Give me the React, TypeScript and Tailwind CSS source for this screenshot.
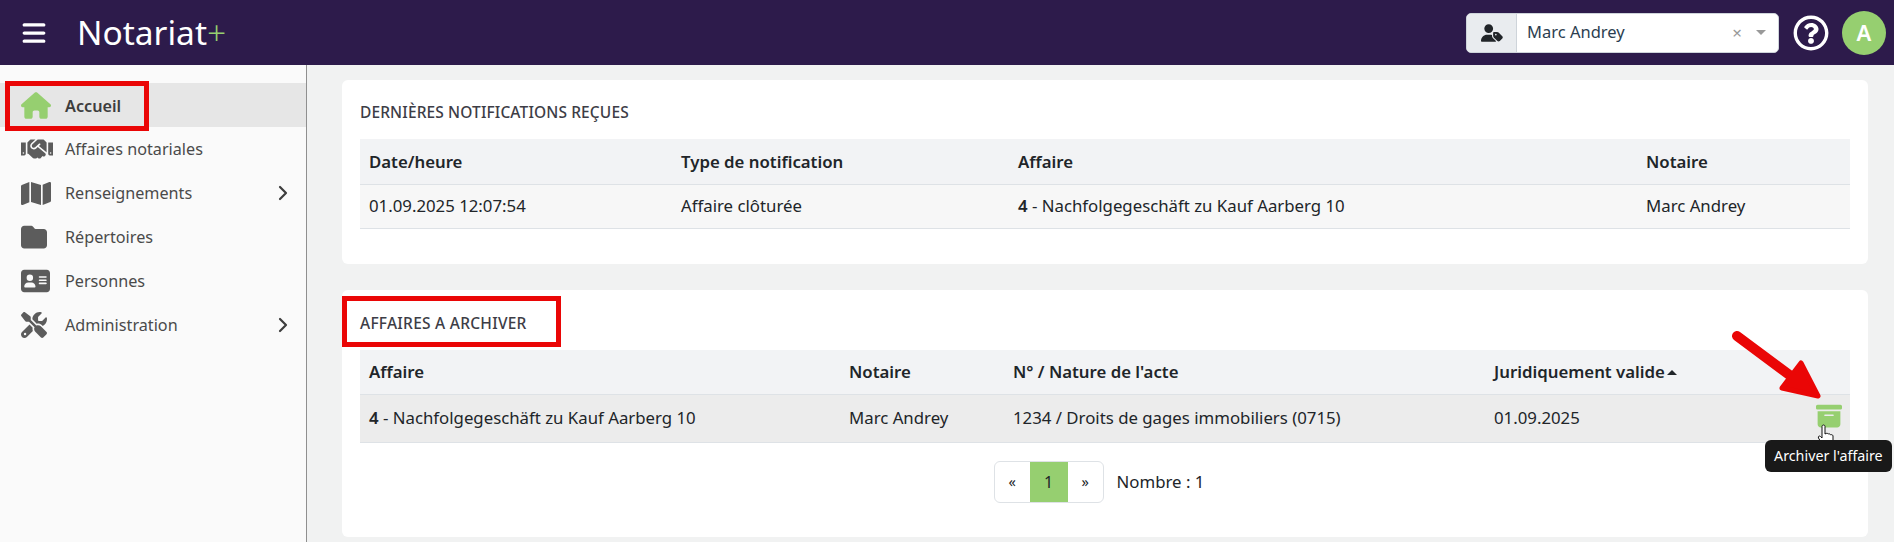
import { ChevronRight } from "lucide-react";
import { FaHouse, FaMap, FaFolder, FaAddressCard, FaScrewdriverWrench, FaBoxArchive, FaUserTag, FaBars } from "react-icons/fa6";
import { FaRegQuestionCircle, FaHandshake } from "react-icons/fa";

const menu = [
  { label: "Accueil", icon: FaHouse, size: "h-[27px] w-[30px] text-[#96cf70]", active: true },
  { label: "Affaires notariales", icon: FaHandshake, size: "h-[26px] w-[32px] text-[#5c5c5c]" },
  { label: "Renseignements", icon: FaMap, size: "h-[27px] w-[30px] text-[#5c5c5c]", sub: true },
  { label: "Répertoires", icon: FaFolder, size: "h-[26px] w-[26px] text-[#5c5c5c]" },
  { label: "Personnes", icon: FaAddressCard, size: "h-[26px] w-[29px] text-[#5c5c5c]" },
  { label: "Administration", icon: FaScrewdriverWrench, size: "h-[26px] w-[26px] text-[#5c5c5c]", sub: true },
];

function Header() {
  return (
    <header className="flex h-[65px] items-center bg-[#2d1b4b] pl-[22px] pr-[8px]">
      <FaBars className="h-[26px] w-[24px] text-white" />
      <div className="ml-[31px] text-[33.5px] leading-none text-white">
        Notariat<span className="font-light text-[#96cf70]">+</span>
      </div>
      <div className="ml-auto flex h-[40px] w-[313px] overflow-hidden rounded-[5px] border border-[#ced4da] bg-white">
        <div className="flex w-[50px] items-center justify-center border-r border-[#ced4da] bg-[#e9ecef]">
          <FaUserTag className="h-[18px] w-[22px] text-[#212529]" />
        </div>
        <div className="flex flex-1 items-center pl-[10px] pr-[12px] text-[16.5px] text-[#2c3e50]">
          Marc Andrey
          <span className="ml-auto text-[17px] text-[#999]">×</span>
          <span className="ml-[14px] h-0 w-0 border-x-[5px] border-t-[5px] border-x-transparent border-t-[#999]" />
        </div>
      </div>
      <FaRegQuestionCircle className="ml-[14px] h-[36px] w-[36px] text-white" />
      <div className="ml-[13px] flex h-[44px] w-[44px] items-center justify-center rounded-full bg-[#96cf70] text-[22px] font-semibold text-white">
        A
      </div>
    </header>
  );
}

function Sidebar() {
  return (
    <aside className="w-[307px] shrink-0 border-r border-[#8f8f8f] bg-[#fafafa] pt-[18px]">
      {menu.map((item) => {
        const Icon = item.icon;
        return (
          <div
            key={item.label}
            className={
              item.active
                ? "flex h-[44px] items-center bg-[#e6e6e6] pl-[21px] pr-[11px] text-[16.2px] font-semibold text-[#3d3d3d]"
                : "flex h-[44px] items-center pl-[21px] pr-[11px] text-[16.2px] text-[#4a4a4a]"
            }
          >
            <span className="flex w-[44px] items-center">
              <Icon className={item.size} />
            </span>
            <span className={item.active ? "pt-[3px]" : "pt-[1px]"}>{item.label}</span>
            {item.sub && <ChevronRight className="ml-auto h-[24px] w-[24px] text-[#3d3d3d]" strokeWidth={2.2} />}
          </div>
        );
      })}
    </aside>
  );
}

function Th({ w, children }: { w: string; children: React.ReactNode }) {
  return <th className={`${w} px-[9px] text-left font-semibold`}>{children}</th>;
}

function Notifications() {
  return (
    <section className="h-[184px] rounded-[6px] bg-white px-[18px] pt-[22px]">
      <h2 className="text-[15.5px] leading-[20px] font-medium tracking-[0.12px] text-[#3d3d46]">DERNIÈRES NOTIFICATIONS REÇUES</h2>
      <table className="mt-[17px] w-full table-fixed text-[16.8px] text-[#212529]">
        <thead>
          <tr className="h-[45px] border-b border-[#dee2e6] bg-[#f2f3f5]">
            <Th w="w-[312px]">Date/heure</Th>
            <Th w="w-[337px]">Type de notification</Th>
            <Th w="w-[628px]">Affaire</Th>
            <Th w="">Notaire</Th>
          </tr>
        </thead>
        <tbody>
          <tr className="h-[44px] border-b border-[#dee2e6] bg-[#f7f7f7]">
            <td className="px-[9px]">01.09.2025 12:07:54</td>
            <td className="px-[9px]">Affaire clôturée</td>
            <td className="px-[9px]">
              <b className="font-semibold">4</b> - Nachfolgegeschäft zu Kauf Aarberg 10
            </td>
            <td className="px-[9px]">Marc Andrey</td>
          </tr>
        </tbody>
      </table>
    </section>
  );
}

function Archive() {
  return (
    <section className="relative mt-[26px] h-[247px] rounded-[6px] bg-white px-[18px] pt-[23px]">
      <h2 className="text-[15.5px] leading-[20px] font-medium tracking-[0.25px] text-[#3d3d46]">AFFAIRES A ARCHIVER</h2>
      <table className="mt-[17px] w-full table-fixed text-[16.8px] text-[#212529]">
        <thead>
          <tr className="h-[44px] border-b border-[#dee2e6] bg-[#f2f3f5]">
            <Th w="w-[480px]">Affaire</Th>
            <Th w="w-[164px]">Notaire</Th>
            <Th w="w-[481px]">N° / Nature de l'acte</Th>
            <Th w="">
              Juridiquement valide
              <span className="mb-[3px] ml-[2px] inline-block h-0 w-0 border-x-[5px] border-b-[5px] border-x-transparent border-b-[#212529] align-middle" />
            </Th>
          </tr>
        </thead>
        <tbody>
          <tr className="h-[48px] border-b border-[#dee2e6] bg-[#ececec]">
            <td className="px-[9px]">
              <b className="font-semibold">4</b> - Nachfolgegeschäft zu Kauf Aarberg 10
            </td>
            <td className="px-[9px]">Marc Andrey</td>
            <td className="px-[9px]">1234 / Droits de gages immobiliers (0715)</td>
            <td className="px-[9px]">01.09.2025</td>
          </tr>
        </tbody>
      </table>
      <div className="mt-[18px] flex items-center justify-center pr-[12px] text-[16.8px] text-[#212529]">
        <div className="flex h-[42px] items-center overflow-hidden rounded-[6px] border border-[#dee2e6] text-[14.5px]">
          <span className="flex h-full w-[35px] items-center justify-center">«</span>
          <span className="flex h-full w-[38px] items-center justify-center bg-[#96cf70] text-[16px]">1</span>
          <span className="flex h-full w-[35px] items-center justify-center">»</span>
        </div>
        <span className="ml-[13px]">Nombre : 1</span>
      </div>

      <FaBoxArchive className="absolute left-[1474px] top-[113px] h-[26px] w-[26px] text-[#96cf70]" />
      <svg className="absolute left-[1475px] top-[134px]" width="20" height="26" viewBox="0 0 20 26">
        <path
          d="M5 2.500c0-2 3-2 3 0V10l1-.5c1-.5 2 0 2.200.5 1-.5 2 0 2.300.8 1-.4 2.200 0 2.500 1V18c0 3-2 5-5 5H9c-2 0-3-1-4-3L1.500 14c-.8-1.500 1-2.700 2-1.500L5 14Z"
          fill="#fff"
          stroke="#111"
          strokeWidth="1"
        />
      </svg>
      <div className="absolute left-[1423px] top-[150px] rounded-[6px] bg-[#191919] px-[9px] py-[5px] text-[14.3px] leading-[22px] whitespace-nowrap text-white">
        Archiver l'affaire
      </div>
    </section>
  );
}

export default function App() {
  return (
    <div className="relative flex h-[542px] flex-col overflow-hidden bg-[#f1f2f2] font-['Noto_Sans',sans-serif]">
      <Header />
      <div className="flex flex-1 overflow-hidden">
        <Sidebar />
        <main className="flex-1 px-[35px] pt-[15px] pr-[26px]">
          <Notifications />
          <Archive />
        </main>
      </div>

      {/* annotations drawn over the capture */}
      <div className="absolute left-[5px] top-[81px] h-[50px] w-[144px] border-[5px] border-[#ea0606]" />
      <div className="absolute left-[342px] top-[296px] h-[51px] w-[219px] border-[5px] border-[#ea0606]" />
      <svg className="absolute left-[1725px] top-[325px]" width="100" height="75" viewBox="0 0 100 75">
        <path d="M12 11 L78 60" stroke="#ea0606" strokeWidth="10" strokeLinecap="round" fill="none" />
        <path d="M76 38 L93 71 L57 63 Z" fill="#ea0606" stroke="#ea0606" strokeWidth="5" strokeLinejoin="round" />
      </svg>
    </div>
  );
}
